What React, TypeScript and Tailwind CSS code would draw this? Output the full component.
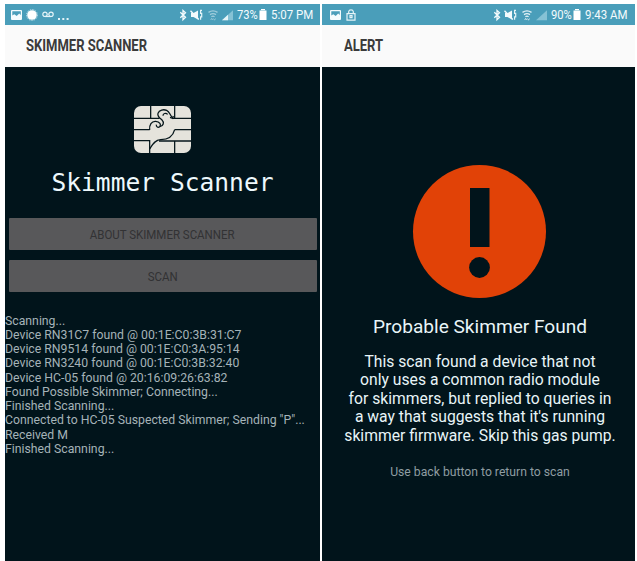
import React from "react";

function PictureIcon() {
  return (
    <svg className="h-[10px] w-[11px] shrink-0" viewBox="0 0 11 10">
      <path fillRule="evenodd" fill="#f4fbfd" d="M1 0h9q1 0 1 1v8q0 1-1 1H1q-1 0-1-1V1q0-1 1-1ZM1.3 1.3v4.2l2-1.3 2.4 1.9 2.5-2.6 1.6 1.4V1.3Z" />
    </svg>
  );
}

function StatusIcons({ wifi, signal }: { wifi: string; signal: string }) {
  return (
    <svg className="h-[14px] w-[56px] shrink-0" viewBox="0 0 56 14" fill="none">
      <path d="m1.3 4.2 5.2 5L4 11.6V2.4l2.5 2.3-5.2 5" stroke="#f4fbfd" strokeWidth="1.3" />
      <path d="M12 5h2.5L19 2.6v9L14.5 9H12Z" fill="#f4fbfd" />
      <path d="m11.5 2.8 8.3 8.6" stroke="#f4fbfd" strokeWidth="1.4" />
      <path d="M23 2.4h-1.4v3h1.1v3.4h-1.1v3" stroke="#e5f4f8" strokeWidth="1.2" />
      <g className={wifi} stroke="#f4fbfd" strokeWidth="1.3">
        <path d="M29.5 4.4q4.5-3 9 0M31 6.6q3-2 6 0M32.4 8.7q1.6-1 3.2 0" />
        <path d="m31.7 12 1-1.7 1 1.7M34.5 10.5l1 1.7 1-1.7" strokeWidth=".8" />
      </g>
      <path d="M43 12.3h11V2.2Z" fill="#86c2d5" />
      <path className={signal} d="M43 12.3h6V6.8Z" fill="#e5f4f8" />
    </svg>
  );
}

function Battery() {
  return (
    <svg className="h-[11px] w-[8px] shrink-0" viewBox="0 0 8 11">
      <path d="M2 0h4v1.5h1.5V11h-7V1.5H2Z" fill="#fff" />
      <path d="M2 1.5h4" stroke="#b9dbe5" />
    </svg>
  );
}

function ChipLogo() {
  return (
    <svg className="h-[47px] w-[57px]" viewBox="42 32 171 141" fill="none">
      <rect x="42" y="32" width="171" height="141" rx="21" fill="#e5e3dc" />
      <g stroke="#06161b" strokeWidth="3.8">
        <path d="M92 32v37H42M164 32v35M158 69h55M42 103h47M42 136h47v37M213 103h-49M164 173v-36h49M164 137h-47" />
        <path d="M89 104c-2-16 6-27 18-26 12 1 18 10 12 16-5 4-11 1-10-6" />
        <path d="M92 69h26M119 94c12-2 14-13 7-20-8-7-15-11-12-20 4-10 16-13 26-9 10 4 9 16 18 22" />
        <path d="m150 66 8 3 2-7M143 57c-6-6-14-2-14 4" />
        <path d="M164 103c-4 16-16 30-42 30-18 1-25 16-33 28" />
      </g>
    </svg>
  );
}

const logLines = [
  "Scanning...",
  "Device RN31C7 found @ 00:1E:C0:3B:31:C7",
  "Device RN9514 found @ 00:1E:C0:3A:95:14",
  "Device RN3240 found @ 00:1E:C0:3B:32:40",
  "Device HC-05 found @ 20:16:09:26:63:82",
  "Found Possible Skimmer; Connecting...",
  "Finished Scanning...",
  "Connected to HC-05 Suspected Skimmer; Sending \"P\"...",
  "Received M",
  "Finished Scanning...",
];

const alertLines = [
  "This scan found a device that not",
  "only uses a common radio module",
  "for skimmers, but replied to queries in",
  "a way that suggests that it's running",
  "skimmer firmware. Skip this gas pump.",
];

function ScannerScreen() {
  return (
    <section className="flex w-[315px] flex-col bg-[#01141b]">
      <div className="flex h-[21px] items-center overflow-hidden bg-[#4a9eba] pl-[6px] text-[13.5px] text-[#f4fbfd]">
        <PictureIcon />
        <svg className="ml-[4px] h-[12px] w-[12px] shrink-0" viewBox="0 0 12 12">
          <circle cx="6" cy="6" r="4.8" fill="#fff" />
          <circle cx="6" cy="6" r="5.4" fill="none" stroke="#d8eef5" strokeWidth=".8" strokeDasharray="1.5 1" />
        </svg>
        <svg className="ml-[4px] h-[7px] w-[12px] shrink-0" viewBox="0 0 12 7" fill="none" stroke="#e5f4f8" strokeWidth="1.2">
          <circle cx="3" cy="3.3" r="2.2" />
          <circle cx="9" cy="3.3" r="2.2" />
          <path d="M3 5.5h6" />
        </svg>
        <svg className="ml-[4px] mt-[8px] h-[2px] w-[11px] shrink-0" viewBox="0 0 11 2" fill="#e5f4f8">
          <path d="M0 0h2v2H0ZM4.3 0h2v2h-2ZM8.6 0h2v2h-2Z" />
        </svg>
        <div className="ml-[110px] flex shrink-0 items-center">
          <StatusIcons wifi="opacity-50" signal="opacity-100" />
          <span className="ml-[2px] w-[21px] shrink-0 origin-left scale-x-[.83] whitespace-nowrap">73%</span>
          <span className="ml-[1px] flex"><Battery /></span>
          <span className="ml-[4px] shrink-0 origin-left scale-x-[.85] whitespace-nowrap">5:07 PM</span>
        </div>
      </div>
      <header className="flex h-[42px] items-center bg-[#fafafa] pl-[21px] text-[16px] font-bold text-[#3b3b3b]">
        <h1 className="origin-left scale-x-[.813] whitespace-nowrap">SKIMMER SCANNER</h1>
      </header>
      <main className="flex flex-1 flex-col">
        <div className="mt-[39px] flex justify-center"><ChipLogo /></div>
        <h2 className="mt-[12px] text-center font-['DejaVu_Sans_Mono',monospace] text-[24.6px] leading-[36px] whitespace-nowrap text-[#eef9fd]">Skimmer Scanner</h2>
        <div className="mt-[17px] flex flex-col gap-[10px] px-[3.5px] text-[13.5px] text-[#323234]">
          <button className="flex h-[32px] items-center justify-center rounded-[1px] bg-[#58585a]"><span className="scale-x-[.85] whitespace-nowrap">ABOUT SKIMMER SCANNER</span></button>
          <button className="flex h-[32px] items-center justify-center rounded-[1px] bg-[#58585a]"><span className="scale-x-[.85]">SCAN</span></button>
        </div>
        <div className="mt-[21.5px] text-[12.25px] leading-[14.25px] whitespace-nowrap text-[#a5b3b8]">
          {logLines.map((line, i) => <p key={i}>{line}</p>)}
        </div>
      </main>
    </section>
  );
}

function AlertScreen() {
  return (
    <section className="flex w-[313px] flex-col bg-[#01141b]">
      <div className="flex h-[21px] items-center overflow-hidden bg-[#4a9eba] pl-[8px] text-[13.5px] text-[#f4fbfd]">
        <PictureIcon />
        <svg className="ml-[5px] h-[12px] w-[10px] shrink-0" viewBox="0 0 10 12" fill="none" stroke="#e5f4f8" strokeWidth="1.2">
          <path d="M1 4.7h8v6.5H1ZM2.7 4.7V2.5Q3 .8 5 .8t2.3 1.7v2.2M4 6.7h2v2H4Z" />
        </svg>
        <div className="ml-[137px] flex shrink-0 items-center">
          <StatusIcons wifi="opacity-90" signal="opacity-0" />
          <span className="ml-[2px] w-[21px] shrink-0 origin-left scale-x-[.83] whitespace-nowrap">90%</span>
          <span className="ml-[1px] flex"><Battery /></span>
          <span className="ml-[4px] shrink-0 origin-left scale-x-[.85] whitespace-nowrap">9:43 AM</span>
        </div>
      </div>
      <header className="flex h-[42px] items-center bg-[#fafafa] pl-[22px] text-[16px] font-bold text-[#3b3b3b]">
        <h1 className="origin-left scale-x-[.813]">ALERT</h1>
      </header>
      <main className="flex flex-1 flex-col items-center text-center whitespace-nowrap">
        <svg className="mt-[97px] ml-[2px] h-[135px] w-[135px] shrink-0" viewBox="0 0 135 135">
          <circle cx="67.5" cy="67.5" r="66.5" fill="#e14207" />
          <path d="M58 24h19.5v59H58Z" fill="#01141b" />
          <circle cx="67.5" cy="103.5" r="10.4" fill="#01141b" />
        </svg>
        <h2 className="mt-[15px] ml-[3px] text-[19.1px] leading-[26px] text-[#e8f5f8]">Probable Skimmer Found</h2>
        <div className="mt-[13px] ml-[3px] text-[15.7px] leading-[18.4px] text-[#e8f5f8]">
          {alertLines.map((line) => <p key={line}>{line}</p>)}
        </div>
        <p className="mt-[19px] ml-[3px] text-[12.2px] leading-[16px] text-[#8f9da2]">Use back button to return to scan</p>
      </main>
    </section>
  );
}

export default function App() {
  return (
    <div className="flex h-[561px] w-[637px] gap-[2px] overflow-hidden bg-white pt-[4px] pl-[5px] font-['Roboto',sans-serif]">
      <ScannerScreen />
      <AlertScreen />
    </div>
  );
}
